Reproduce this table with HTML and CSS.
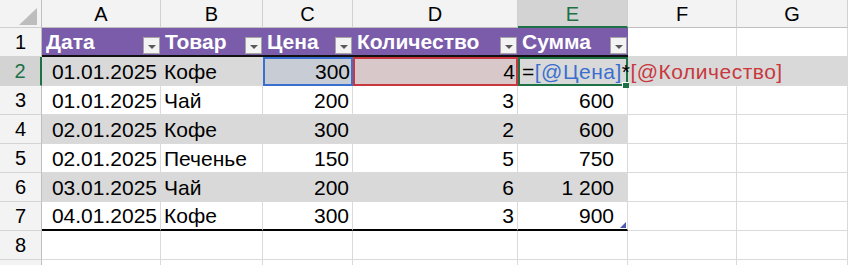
FILE: index.html
```html
<!doctype html>
<html lang="ru">
  <head>
    <meta charset="utf-8" />
    <title>Продажи</title>
    <link rel="stylesheet" href="styles.css">
  </head>

  <body>
    <div class="sheet">
      <!-- column letters -->
      <div class="corner">
        <svg width="18" height="17" viewBox="0 0 18 17"><polygon points="0,17 18,17 18,0" fill="#bdbdbd" /></svg>
      </div>
      <div class="col">A</div>
      <div class="col">B</div>
      <div class="col">C</div>
      <div class="col">D</div>
      <div class="col sel">E</div>
      <div class="col">F</div>
      <div class="col">G</div>

      <!-- table header -->
      <div class="rn">1</div>
      <div class="th">Дата<span class="filter"></span></div>
      <div class="th">Товар<span class="filter"></span></div>
      <div class="th">Цена<span class="filter"></span></div>
      <div class="th">Количество<span class="filter"></span></div>
      <div class="th">Сумма<span class="filter"></span></div>
      <div></div>
      <div></div>

      <!-- row being edited -->
      <div class="rn sel">2</div>
      <div class="band num">01.01.2025</div>
      <div class="band">Кофе</div>
      <div class="band num ref-blue">300</div>
      <div class="band num ref-red">4</div>
      <div class="band active">=<span class="fx-c">[@Цена]</span>*<span class="fx-q">[@Количество]</span></div>
      <div class="band flat"></div>
      <div class="band"></div>

      <div class="rn">3</div>
      <div class="num">01.01.2025</div>
      <div>Чай</div>
      <div class="num">200</div>
      <div class="num">3</div>
      <div class="num sum">600</div>
      <div></div>
      <div></div>

      <div class="rn">4</div>
      <div class="band num">02.01.2025</div>
      <div class="band">Кофе</div>
      <div class="band num">300</div>
      <div class="band num">2</div>
      <div class="band num sum">600</div>
      <div></div>
      <div></div>

      <div class="rn">5</div>
      <div class="num">02.01.2025</div>
      <div>Печенье</div>
      <div class="num">150</div>
      <div class="num">5</div>
      <div class="num sum">750</div>
      <div></div>
      <div></div>

      <div class="rn">6</div>
      <div class="band num">03.01.2025</div>
      <div class="band">Чай</div>
      <div class="band num">200</div>
      <div class="band num">6</div>
      <div class="band num sum">1 200</div>
      <div></div>
      <div></div>

      <div class="rn">7</div>
      <div class="num last">04.01.2025</div>
      <div class="last">Кофе</div>
      <div class="num last">300</div>
      <div class="num last">3</div>
      <div class="num sum last resize">900</div>
      <div></div>
      <div></div>

      <div class="rn">8</div>
      <div></div><div></div><div></div><div></div><div></div><div></div><div></div>

      <!-- next row, only its top edge fits -->
      <div class="rn"></div>
      <div></div><div></div><div></div><div></div><div></div><div></div><div></div>
    </div>
  </body>
</html>
```

FILE: styles.css
```css
* {
  box-sizing: border-box;
}

html,
body {
  margin: 0;
  height: 100%;
  overflow: hidden;
  background-color: #fff;
}

body {
  font-family: "Liberation Sans", Arial, sans-serif;
  color: #000;
}

.sheet {
  display: grid;
  grid-template-columns: 42px 119px 102px 90px 165px 110px 109px 111px;
  grid-template-rows: 28px repeat(9, 29px);
  font-size: 21px;
}

.sheet > div {
  display: flex;
  align-items: center;
  padding: 1px 3px 0 3px;
  white-space: nowrap;
  border-right: 1px solid #dadada;
  border-bottom: 1px solid #dadada;
}

/* headers */
.corner {
  justify-content: flex-end;
  background-color: #f3f3f3;
  border-right-color: #bfbfbf !important;
  border-bottom-color: #cfcfcf !important;
}

.corner svg {
  align-self: flex-end;
  margin: 0 1px 2px 0;
}

.sheet > .col {
  justify-content: center;
  font-size: 20px;
  padding-top: 2px;
  background-color: #f3f3f3;
  border-right-color: #d0d0d0;
  border-bottom-color: #bfbfbf;
}

.sheet > .col.sel {
  background-color: #d3d3d3;
  color: #1e7145;
  border-bottom: 2px solid #1e7145;
}

.sheet > .rn {
  justify-content: center;
  font-size: 20px;
  background-color: #f3f3f3;
  border-right-color: #bfbfbf;
  border-bottom-color: #d3d3d3;
}

.sheet > .rn.sel {
  background-color: #d3d3d3;
  color: #1e7145;
  border-right: 2px solid #1e7145;
}

/* table */
.sheet > .th {
  background-color: #7a5caa;
  color: #fff;
  font-weight: bold;
  padding: 1px 1px 0 4px;
  border-right: none;
  border-bottom: 2px solid #111;
}

.filter {
  display: flex;
  justify-content: center;
  align-items: center;
  align-self: flex-end;
  width: 17px;
  height: 17px;
  margin: 0 0 1px auto;
  background-color: #f3f3f3;
  border: 1px solid #a4a4a4;
}

.filter::after {
  content: "";
  margin-top: 2px;
  border-left: 4px solid transparent;
  border-right: 4px solid transparent;
  border-top: 4px solid #595959;
}

.sheet > .band {
  background-color: #d9d9d9;
  border-right-color: #d9d9d9;
}

.num {
  justify-content: flex-end;
}

.sheet > .sum {
  padding-right: 13px;
  border-right-color: #dadada;
}

.sheet > .last {
  border-bottom: 2px solid #000;
}

.resize {
  position: relative;
}

.resize::after {
  content: "";
  position: absolute;
  right: 1px;
  bottom: 1px;
  border-left: 6px solid transparent;
  border-bottom: 6px solid #4b5cb3;
}

/* formula references */
.sheet > .ref-blue {
  background-color: #c8ccd5;
  border: 2px solid #3b6fcf;
  padding-right: 1px;
}

.sheet > .ref-red {
  background-color: #d9c8c9;
  border: 2px solid #c8383e;
  padding-right: 1px;
}

.sheet > .active {
  position: relative;
  z-index: 1;
  padding-left: 2px;
  letter-spacing: 0.5px;
  border: 2px solid #1e7145;
}

.active::after {
  content: "";
  position: absolute;
  right: -3px;
  bottom: -4px;
  width: 6px;
  height: 5px;
  background-color: #1e7145;
  border-top: 1px solid #fff;
  border-left: 1px solid #fff;
}

.fx-c {
  color: #3b6fcf;
}

.fx-q {
  color: #c8383e;
}

.sheet > .flat {
  border-right-color: #d9d9d9;
}
```
